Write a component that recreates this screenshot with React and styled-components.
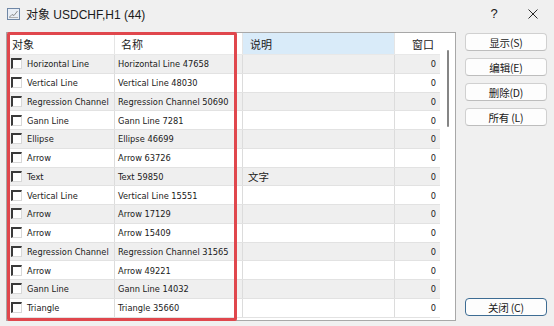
import React from "react";
import styled, { createGlobalStyle } from "styled-components";

const Global = createGlobalStyle`
  html, body { margin: 0; padding: 0; background: #f0f0f0; }
  body { font-family: "Liberation Sans", "Noto Sans CJK SC", sans-serif; }
`;

const Window = styled.div`
  position: relative;
  width: 554px;
  height: 326px;
  background: #f0f0f0;
  overflow: hidden;
  color: #1a1a1a;
`;

const TitleBar = styled.div`
  height: 27px;
  display: flex;
  align-items: center;
  padding-left: 7px;
  background: #f0f0f0;
`;

const TitleText = styled.div`
  margin-left: 6px;
  font-family: "Liberation Sans", "Noto Sans CJK SC", sans-serif;
  font-size: 12px;
  color: #1a1a1a;
  flex: 1;
`;

const TitleBtn = styled.div`
  width: ${(p) => p.$w}px;
  margin-right: ${(p) => p.$mr}px;
  display: flex;
  justify-content: center;
  align-items: center;
  font-family: "Liberation Sans", sans-serif;
  font-size: 13px;
  color: #1a1a1a;
`;

const Body = styled.div`
  display: flex;
  padding: 5px 0 0 6px;
  height: 289px;
`;

const Table = styled.div`
  width: 450px;
  height: 289px;
  box-sizing: border-box;
  border: 1px solid #a8a8a8;
  background: #fff;
  display: flex;
  overflow: hidden;
`;

const Grid = styled.div`
  width: 433px;
  display: flex;
  flex-direction: column;
`;

const cols = "108px 128px 152px 45px";

const HeaderRow = styled.div`
  display: grid;
  grid-template-columns: ${cols};
  height: 22px;
  flex: none;
  border-bottom: 1px solid #e8e8e8;
  box-sizing: border-box;
`;

const HeadCell = styled.div`
  display: flex;
  align-items: center;
  justify-content: ${(p) => (p.$right ? "flex-end" : "flex-start")};
  padding: ${(p) => (p.$right ? "0 6px 0 0" : `0 0 0 ${p.$pl || 5}px`)};
  font-family: "Noto Sans CJK SC", sans-serif;
  font-size: 11px;
  color: #1a1a1a;
  background: ${(p) => (p.$active ? "#d9ebf9" : "#fff")};
  border-right: 1px solid #e5e5e5;
  &:last-child { border-right: none; }
`;

const Row = styled.div`
  display: grid;
  grid-template-columns: ${cols};
  height: 18.75px;
  flex: none;
  box-sizing: border-box;
  background: ${(p) => (p.$alt ? "#efefef" : "#fff")};
  border-bottom: 1px solid #e2e2e2;
`;

const Cell = styled.div`
  display: flex;
  align-items: center;
  justify-content: ${(p) => (p.$right ? "flex-end" : "flex-start")};
  padding: ${(p) => (p.$right ? "0 4px 0 0" : `0 0 0 ${p.$pl ?? 3}px`)};
  font-family: ${(p) =>
    p.$cjk
      ? `"Noto Sans CJK SC", sans-serif`
      : `"DejaVu Sans Condensed", "Liberation Sans", sans-serif`};
  font-size: ${(p) => (p.$cjk ? 10.5 : 9.2)}px;
  color: #1a1a1a;
  white-space: nowrap;
  overflow: hidden;
  border-right: 1px solid #dcdcdc;
  &:last-child { border-right: none; }
`;

const Check = styled.span`
  display: inline-block;
  width: 11px;
  height: 11px;
  box-sizing: border-box;
  margin-left: 4px;
  margin-right: 5px;
  background: #fff;
  border-top: 2px solid #3a3a3a;
  border-left: 2px solid #3a3a3a;
  border-right: 1px solid #d8d8d8;
  border-bottom: 1px solid #d8d8d8;
  flex: none;
`;

const Gutter = styled.div`
  width: 15px;
  display: flex;
  justify-content: center;
  padding-top: 17px;
  background: #fff;
`;

const Thumb = styled.div`
  width: 2px;
  height: 77px;
  background: #858585;
  border-radius: 1px;
`;

const Side = styled.div`
  width: 82px;
  margin-left: 9px;
  padding-top: 1px;
  padding-bottom: 5px;
  display: flex;
  flex-direction: column;
  gap: 7px;
`;

const Button = styled.div`
  height: 18px;
  box-sizing: border-box;
  border: 1px solid ${(p) => (p.$default ? "#3d6c93" : "#d0d0d0")};
  border-bottom-color: ${(p) => (p.$default ? "#3d6c93" : "#bdbdbd")};
  border-radius: 4px;
  background: #fdfdfd;
  display: flex;
  align-items: center;
  justify-content: center;
  font-family: "Noto Sans CJK SC", sans-serif;
  font-size: 10.5px;
  color: #1a1a1a;
  margin-top: ${(p) => (p.$bottom ? "auto" : "0")};
  letter-spacing: -0.2px;
`;

const Highlight = styled.div`
  position: absolute;
  left: 7px;
  top: 32px;
  width: 230px;
  height: 289px;
  box-sizing: border-box;
  border: 3px solid #e0474d;
  border-radius: 2px;
  pointer-events: none;
`;

const rows = [
  ["Horizontal Line", "Horizontal Line 47658", ""],
  ["Vertical Line", "Vertical Line 48030", ""],
  ["Regression Channel", "Regression Channel 50690", ""],
  ["Gann Line", "Gann Line 7281", ""],
  ["Ellipse", "Ellipse 46699", ""],
  ["Arrow", "Arrow 63726", ""],
  ["Text", "Text 59850", "文字"],
  ["Vertical Line", "Vertical Line 15551", ""],
  ["Arrow", "Arrow 17129", ""],
  ["Arrow", "Arrow 15409", ""],
  ["Regression Channel", "Regression Channel 31565", ""],
  ["Arrow", "Arrow 49221", ""],
  ["Gann Line", "Gann Line 14032", ""],
  ["Triangle", "Triangle 35660", ""],
];

function AppIcon() {
  return (
    <svg width="13" height="12" viewBox="0 0 13 12">
      <rect x="0.5" y="0.5" width="12" height="11" fill="#e9eef5" stroke="#6f87a6" />
      <polyline points="2.5,9 5,6.5 7,7.5 10.5,3" fill="none" stroke="#8a8a8a" strokeWidth="1" />
      <line x1="2" y1="9.5" x2="11" y2="9.5" stroke="#b0b0b0" strokeWidth="1" />
    </svg>
  );
}

function CloseIcon() {
  return (
    <svg width="10" height="10" viewBox="0 0 10 10">
      <path d="M0.5 0.5 L9.5 9.5 M9.5 0.5 L0.5 9.5" stroke="#2a2a2a" strokeWidth="1" fill="none" />
    </svg>
  );
}

export default function App() {
  return (
    <>
      <Global />
      <Window>
        <TitleBar>
          <AppIcon />
          <TitleText>对象 USDCHF,H1 (44)</TitleText>
          <TitleBtn $w={14} $mr={25}>?</TitleBtn>
          <TitleBtn $w={14} $mr={14}>
            <CloseIcon />
          </TitleBtn>
        </TitleBar>
        <Body>
          <Table>
            <Grid>
              <HeaderRow>
                <HeadCell $pl={5}>对象</HeadCell>
                <HeadCell $pl={6}>名称</HeadCell>
                <HeadCell $pl={7} $active>说明</HeadCell>
                <HeadCell $right>窗口</HeadCell>
              </HeaderRow>
              {rows.map((r, i) => (
                <Row key={i} $alt={i % 2 === 0}>
                  <Cell $pl={0}>
                    <Check />
                    {r[0]}
                  </Cell>
                  <Cell>{r[1]}</Cell>
                  <Cell $cjk={!!r[2]} $pl={5}>{r[2]}</Cell>
                  <Cell $right>0</Cell>
                </Row>
              ))}
            </Grid>
            <Gutter>
              <Thumb />
            </Gutter>
          </Table>
          <Side>
            <Button>显示(S)</Button>
            <Button>编辑(E)</Button>
            <Button>删除(D)</Button>
            <Button>所有 (L)</Button>
            <Button $bottom $default>关闭 (C)</Button>
          </Side>
        </Body>
        <Highlight />
      </Window>
    </>
  );
}
